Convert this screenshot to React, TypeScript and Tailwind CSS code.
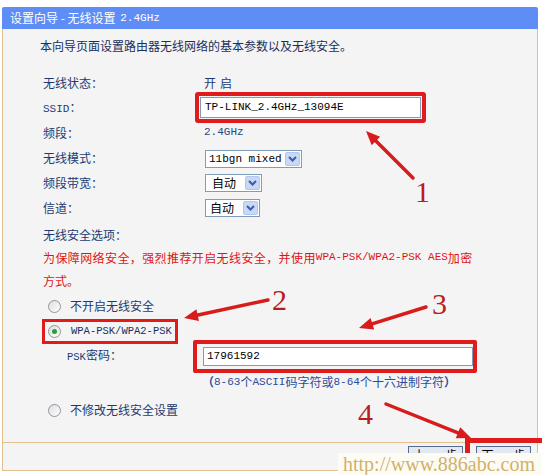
import React from "react";

const RED = "#d81b1b";

function Arrow({ x1, y1, x2, y2 }: { x1: number; y1: number; x2: number; y2: number }) {
  const dx = x2 - x1;
  const dy = y2 - y1;
  const len = Math.sqrt(dx * dx + dy * dy);
  const ux = dx / len;
  const uy = dy / len;
  const hl = 14;
  const hw = 6;
  const bx = x2 - ux * hl;
  const by = y2 - uy * hl;
  const pts = `${x2},${y2} ${bx - uy * hw},${by + ux * hw} ${bx + uy * hw},${by - ux * hw}`;
  return (
    <g>
      <line x1={x1} y1={y1} x2={bx + ux * 2} y2={by + uy * 2} stroke={RED} strokeWidth={3.5} strokeLinecap="round" />
      <polygon points={pts} fill={RED} />
    </g>
  );
}

function Chevron() {
  return (
    <svg width="9" height="6" viewBox="0 0 9 6">
      <path d="M1 1 L4.5 4.5 L8 1" fill="none" stroke="#3b5ca8" strokeWidth="2" />
    </svg>
  );
}

function Radio({ checked }: { checked?: boolean }) {
  return (
    <span className="flex h-[13px] w-[13px] shrink-0 items-center justify-center rounded-full border border-[#8e959b] bg-gradient-to-br from-[#dedede] to-white">
      {checked ? <span className="h-[5px] w-[5px] rounded-full bg-[#2e9b3c]" /> : null}
    </span>
  );
}

export default function App() {
  return (
    <div className="relative h-[475px] w-[542px] overflow-hidden bg-white font-['Noto_Sans_CJK_SC',sans-serif] text-[12px] text-[#1e3a70]">
      <div className="ml-[2px] w-[536px] pt-[7px]">
        {/* header */}
        <div className="flex h-[22px] items-center whitespace-pre rounded-t-[2px] bg-[#5d8df5] pl-[8px] leading-none text-white">
          <span>设置向导 - 无线设置 </span>
          <span className="ml-[2px] font-['Liberation_Mono',monospace] text-[11px]">2.4GHz</span>
        </div>
        {/* body */}
        <div className="border-x border-b border-[#e3c08e] bg-[#f4f4f4]">
          <div className="pl-[37px] pt-[7px]">
            <div className="h-[20px] leading-[20px] text-[#1a2f5c]">本向导页面设置路由器无线网络的基本参数以及无线安全。</div>
            <div className="mt-[14px] pl-[3px]">
              <div className="flex h-[25px] items-center">
                <div className="w-[161px]">无线状态：</div>
                <div className="tracking-[4px]">开启</div>
              </div>
              <div className="flex h-[25px] items-center">
                <div className="w-[161px]">
                  <span className="font-['Liberation_Mono',monospace] text-[11px]">SSID</span>：
                </div>
                <div className="-ml-[9px] rounded-[3px] border-[4px] border-[#e01b1b] p-[1px]">
                  <div className="flex h-[21px] w-[221px] items-center border border-[#7f9db9] bg-white pl-[4px] font-['Liberation_Mono',monospace] text-[11px] text-black">
                    TP-LINK_2.4GHz_13094E
                  </div>
                </div>
              </div>
              <div className="flex h-[25px] items-center">
                <div className="w-[161px]">频段：</div>
                <div className="font-['Liberation_Mono',monospace] text-[11px] text-[#2b4680]">2.4GHz</div>
              </div>
              <div className="flex h-[25px] items-center">
                <div className="w-[162px]">无线模式：</div>
                <div className="mt-[3px] flex h-[18px] w-[97px] items-center justify-between border border-[#7f9db9] bg-white pl-[3px] pr-[1px] font-['Liberation_Mono',monospace] text-[11px] text-black">
                  <span>11bgn mixed</span>
                  <span className="flex h-[14px] w-[15px] items-center justify-center rounded-[2px] border border-[#b2c7ee] bg-[#c8d9f7]">
                    <Chevron />
                  </span>
                </div>
              </div>
              <div className="flex h-[25px] items-center">
                <div className="w-[162px]">频段带宽：</div>
                <div className="flex h-[18px] w-[57px] items-center justify-between border border-[#7f9db9] bg-white pl-[6px] pr-[1px] text-black">
                  <span>自动</span>
                  <span className="flex h-[14px] w-[15px] items-center justify-center rounded-[2px] border border-[#b2c7ee] bg-[#c8d9f7]">
                    <Chevron />
                  </span>
                </div>
              </div>
              <div className="flex h-[25px] items-center">
                <div className="w-[162px]">信道：</div>
                <div className="flex h-[18px] w-[55px] items-center justify-between border border-[#7f9db9] bg-white pl-[4px] pr-[1px] text-black">
                  <span>自动</span>
                  <span className="flex h-[14px] w-[15px] items-center justify-center rounded-[2px] border border-[#b2c7ee] bg-[#c8d9f7]">
                    <Chevron />
                  </span>
                </div>
              </div>
              <div className="mt-[4px] flex h-[22px] items-center">无线安全选项：</div>
              <div className="flex h-[23px] items-center whitespace-pre tracking-[0.4px] text-[#e01414]">
                <span>为保障网络安全，强烈推荐开启无线安全，并使用</span>
                <span className="font-['Liberation_Mono',monospace] text-[11px] tracking-normal">WPA-PSK/WPA2-PSK AES</span>
                <span>加密</span>
              </div>
              <div className="flex h-[23px] items-center text-[#e01414]">方式。</div>
              <div className="flex h-[28px] items-center pl-[5px]">
                <Radio />
                <span className="ml-[9px]">不开启无线安全</span>
              </div>
              <div className="flex h-[23px] items-center">
                <div className="-ml-[1px] flex h-[25px] items-center border-[3px] border-[#e01b1b] pl-[3px] pr-[3px]">
                  <Radio checked />
                  <span className="ml-[10px] font-['Liberation_Mono',monospace] text-[10.5px] text-[#1a2f5c]">WPA-PSK/WPA2-PSK</span>
                </div>
              </div>
              <div className="flex h-[26px] items-center">
                <div className="ml-[24px] w-[126px]">
                  <span className="font-['Liberation_Mono',monospace] text-[10.5px]">PSK</span>密码：
                </div>
                <div className="flex h-[33px] items-center rounded-[2px] border-[4px] border-[#e01b1b] pl-[6px]">
                  <div className="flex h-[19px] w-[270px] items-center border border-[#7f9db9] bg-white pl-[3px] font-['Liberation_Mono',monospace] text-[11px] text-black">
                    17961592
                  </div>
                </div>
              </div>
              <div className="flex h-[26px] items-center pl-[159px] text-[#2b4c9b]">
                <span className="font-bold">（</span>
                <span className="font-['Liberation_Mono',monospace] text-[11px]">8-63</span>个
                <span className="font-['Liberation_Mono',monospace] text-[11px]">ASCII</span>码字符或
                <span className="font-['Liberation_Mono',monospace] text-[11px]">8-64</span>个十六进制字符
                <span className="font-bold">）</span>
              </div>
              <div className="flex h-[30px] items-center pl-[5px]">
                <Radio />
                <span className="ml-[9px]">不修改无线安全设置</span>
              </div>
            </div>
          </div>
          <div className="mt-[17px] h-px bg-[#e3c08e]" />
          <div className="flex h-[27px] items-start justify-end gap-[13px] pr-[6px] pt-[3px] text-black">
            <div className="flex h-[22px] w-[55px] items-start justify-center whitespace-nowrap border border-[#56698f] bg-[#e2e8f4] pl-[4px] pt-[1px] text-[12px] leading-[14px] tracking-[4px]">上一步</div>
            <div className="flex h-[22px] w-[55px] items-start justify-center whitespace-nowrap border border-[#56698f] bg-[#e2e8f4] pl-[4px] pt-[1px] text-[12px] leading-[14px] tracking-[4px]">下一步</div>
          </div>
        </div>
      </div>

      {/* annotations */}
      <svg className="pointer-events-none absolute left-0 top-0" width="542" height="475" viewBox="0 0 542 475">
        <Arrow x1={413} y1={178} x2={366} y2={131} />
        <Arrow x1={268} y1={300} x2={184} y2={318} />
        <Arrow x1={426} y1={307} x2={359} y2={328} />
        <Arrow x1={386} y1={404} x2={471} y2={438} />
        <rect x={467.5} y={440.5} width={100} height={60} fill="none" stroke="#e01b1b" strokeWidth={5} />
        <g fill="#b81d1d" fontFamily="'Liberation Serif', serif" fontSize="30">
          <text x={415} y={202}>1</text>
          <text x={272} y={310}>2</text>
          <text x={432} y={314}>3</text>
          <text x={358} y={424}>4</text>
        </g>
      </svg>

      {/* watermark */}
      <div className="absolute left-[338px] top-[453px] flex h-[22px] w-[204px] items-center bg-[#fdfcf4] pl-[5px] font-['Liberation_Serif',serif] text-[20px] leading-none text-[#d3b06c]">
        http://www.886abc.com
      </div>
    </div>
  );
}
